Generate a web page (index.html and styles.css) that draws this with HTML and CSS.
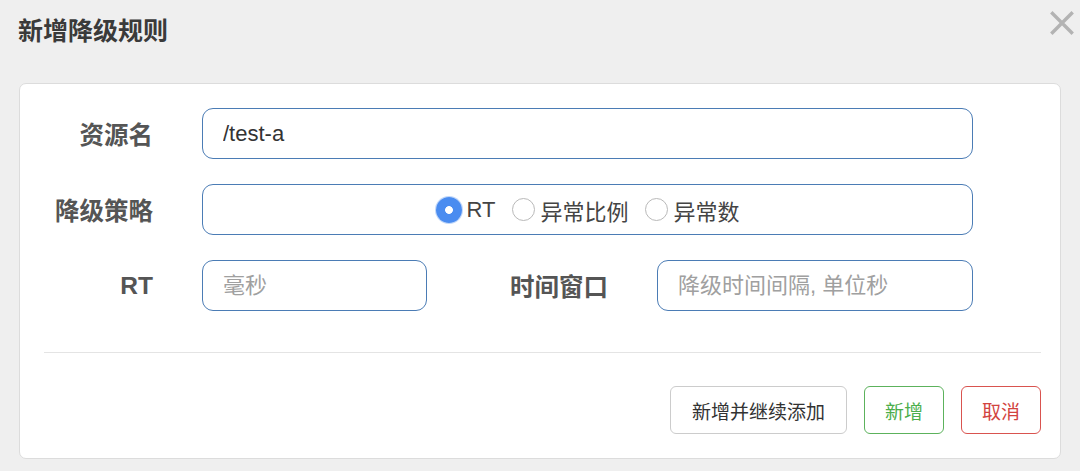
FILE: index.html
```html
<!DOCTYPE html>
<html lang="zh-CN">
<head>
<meta charset="utf-8">
<title>新增降级规则</title>
<link rel="stylesheet" href="styles.css">
</head>
<body>
<div class="dialog">
  <div class="header">
    <h1 class="title">新增降级规则</h1>
    <svg class="close" width="24" height="24" viewBox="0 0 24 24" aria-label="关闭">
      <path d="M2.5 2.5 L21.5 21.5 M21.5 2.5 L2.5 21.5" stroke="#b3b3b3" stroke-width="3.4" stroke-linecap="square" fill="none"/>
    </svg>
  </div>
  <div class="card">
    <div class="form">
      <label class="label">资源名</label>
      <input class="input" type="text" value="/test-a">

      <label class="label">降级策略</label>
      <div class="input radios">
        <span class="radio-item"><span class="radio checked"></span><span class="radio-text">RT</span></span>
        <span class="radio-item"><span class="radio"></span><span class="radio-text">异常比例</span></span>
        <span class="radio-item"><span class="radio"></span><span class="radio-text">异常数</span></span>
      </div>

      <label class="label">RT</label>
      <div class="split">
        <input class="input input-rt" type="text" placeholder="毫秒">
        <label class="label label-inline">时间窗口</label>
        <input class="input input-window" type="text" placeholder="降级时间间隔, 单位秒">
      </div>
    </div>
    <div class="divider"></div>
    <div class="actions">
      <button class="btn btn-default btn-wide">新增并继续添加</button>
      <button class="btn btn-success">新增</button>
      <button class="btn btn-danger">取消</button>
    </div>
  </div>
</div>
</body>
</html>
```

FILE: styles.css
```css
* { box-sizing: border-box; }

body {
  margin: 0;
  background: #efefef;
  font-family: "Liberation Sans", "Noto Sans CJK SC", sans-serif;
  color: #333;
}

.dialog {
  width: 1080px;
  height: 471px;
}

.header {
  height: 83px;
  display: flex;
  justify-content: space-between;
  align-items: flex-start;
  padding: 16px 6px 0 18px;
}

.title {
  margin: 0;
  font-size: 25px;
  line-height: 30px;
  font-weight: bold;
  color: #3a3a3a;
}

.close {
  margin-top: -5px;
}

.card {
  margin: 0 19px;
  background: #fff;
  border: 1px solid #dcdcdc;
  border-radius: 7px;
  padding: 24px 19px 24px 24px;
}

.form {
  display: grid;
  grid-template-columns: 109px 771px;
  grid-auto-rows: 51px;
  column-gap: 49px;
  row-gap: 25px;
}

.label {
  display: flex;
  align-items: center;
  justify-content: flex-end;
  font-size: 24.5px;
  font-weight: bold;
  color: #555;
  white-space: nowrap;
}

.input {
  height: 51px;
  border: 1.6px solid #4b7cb5;
  border-radius: 11px;
  padding: 0 20px;
  font-family: "Liberation Sans", "Noto Sans CJK SC", sans-serif;
  font-size: 22px;
  color: #333;
  background: #fff;
  outline: none;
  width: 100%;
}

.input::placeholder {
  color: #a0a0a0;
}

.radios {
  display: flex;
  align-items: center;
  justify-content: center;
  gap: 17px;
  padding: 0;
}

.radio-item {
  display: flex;
  align-items: center;
  gap: 5px;
}

.radio {
  width: 23px;
  height: 23px;
  border-radius: 50%;
  border: 1px solid #b9b9b9;
  background: #fff;
  display: inline-block;
}

.radio.checked {
  width: 26px;
  height: 26px;
  border: none;
  background: radial-gradient(circle, #fff 0 3.5px, #4a8cf0 4.3px);
  box-shadow: 0 0 0 1px rgba(74, 140, 240, 0.35);
}

.radio-text {
  font-size: 22px;
  color: #444;
}

.split {
  display: flex;
}

.input-rt {
  width: 225px;
  flex: none;
}

.label-inline {
  flex: 1;
  padding-right: 49px;
}

.input-window {
  width: 316px;
  flex: none;
}

.divider {
  height: 1px;
  background: #e4e4e4;
  margin-top: 41px;
}

.actions {
  display: flex;
  justify-content: flex-end;
  gap: 17px;
  margin-top: 33px;
}

.btn {
  height: 48px;
  width: 80px;
  border-radius: 6px;
  background: #fff;
  font-family: "Liberation Sans", "Noto Sans CJK SC", sans-serif;
  font-size: 19px;
  padding: 0;
  cursor: pointer;
}

.btn-wide {
  width: 177px;
}

.btn-default {
  border: 1px solid #cccccc;
  color: #333;
}

.btn-success {
  border: 1px solid #5cb25c;
  color: #4cae4c;
}

.btn-danger {
  border: 1px solid #d9534f;
  color: #d2443f;
}
```
